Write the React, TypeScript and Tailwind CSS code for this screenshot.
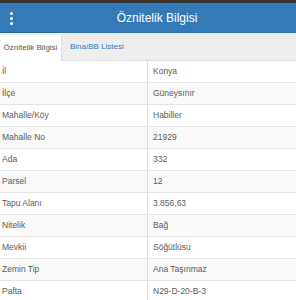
import React from "react";

const rows: [string, string][] = [
  ["İl", "Konya"],
  ["İlçe", "Güneysınır"],
  ["Mahalle/Köy", "Habiller"],
  ["Mahalle No", "21929"],
  ["Ada", "332"],
  ["Parsel", "12"],
  ["Tapu Alanı", "3.856,63"],
  ["Nitelik", "Bağ"],
  ["Mevkii", "Söğütlüsu"],
  ["Zemin Tip", "Ana Taşınmaz"],
  ["Pafta", "N29-D-20-B-3"],
];

export default function App() {
  return (
    <div
      className="w-[296px] h-[300px] overflow-hidden bg-white"
      style={{ fontFamily: '"Liberation Sans", Arial, sans-serif' }}
    >
      <div className="h-[3px] bg-[#3b3631]" />
      <div className="relative h-[30px] bg-[#337ab7] border-b border-[#2e6da4] flex items-center justify-center pl-[18px]">
        <div className="absolute left-[10px] top-[9px] flex flex-col gap-[2px]">
          <span className="block w-[3px] h-[3px] rounded-full bg-white" />
          <span className="block w-[3px] h-[3px] rounded-full bg-white" />
          <span className="block w-[3px] h-[3px] rounded-full bg-white" />
        </div>
        <span className="text-white text-[12px] leading-none">Öznitelik Bilgisi</span>
      </div>
      <div className="h-[28px] bg-[#eeeeee] flex items-end border-b border-[#dddddd]">
        <div className="h-[26px] w-[62px] bg-white border-r border-[#dddddd] -mb-px flex items-center justify-center text-[8px] text-[#555]">
          Öznitelik Bilgisi
        </div>
        <div className="h-[26px] px-[8px] flex items-center text-[8px] text-[#337ab7]">
          Bina/BB Listesi
        </div>
      </div>
      <div className="flex flex-col">
        {rows.map(([k, v], i) => (
          <div
            key={k}
            className={`flex h-[22px] border-b border-[#e6e6e6] text-[8.5px] text-[#5a5a5a] ${
              i % 2 === 1 ? "bg-[#f9f9f9]" : "bg-white"
            }`}
          >
            <div className="w-[148px] border-r border-[#dddddd] pl-[2px] flex items-center">{k}</div>
            <div className="flex-1 pl-[5px] flex items-center">{v}</div>
          </div>
        ))}
      </div>
    </div>
  );
}
